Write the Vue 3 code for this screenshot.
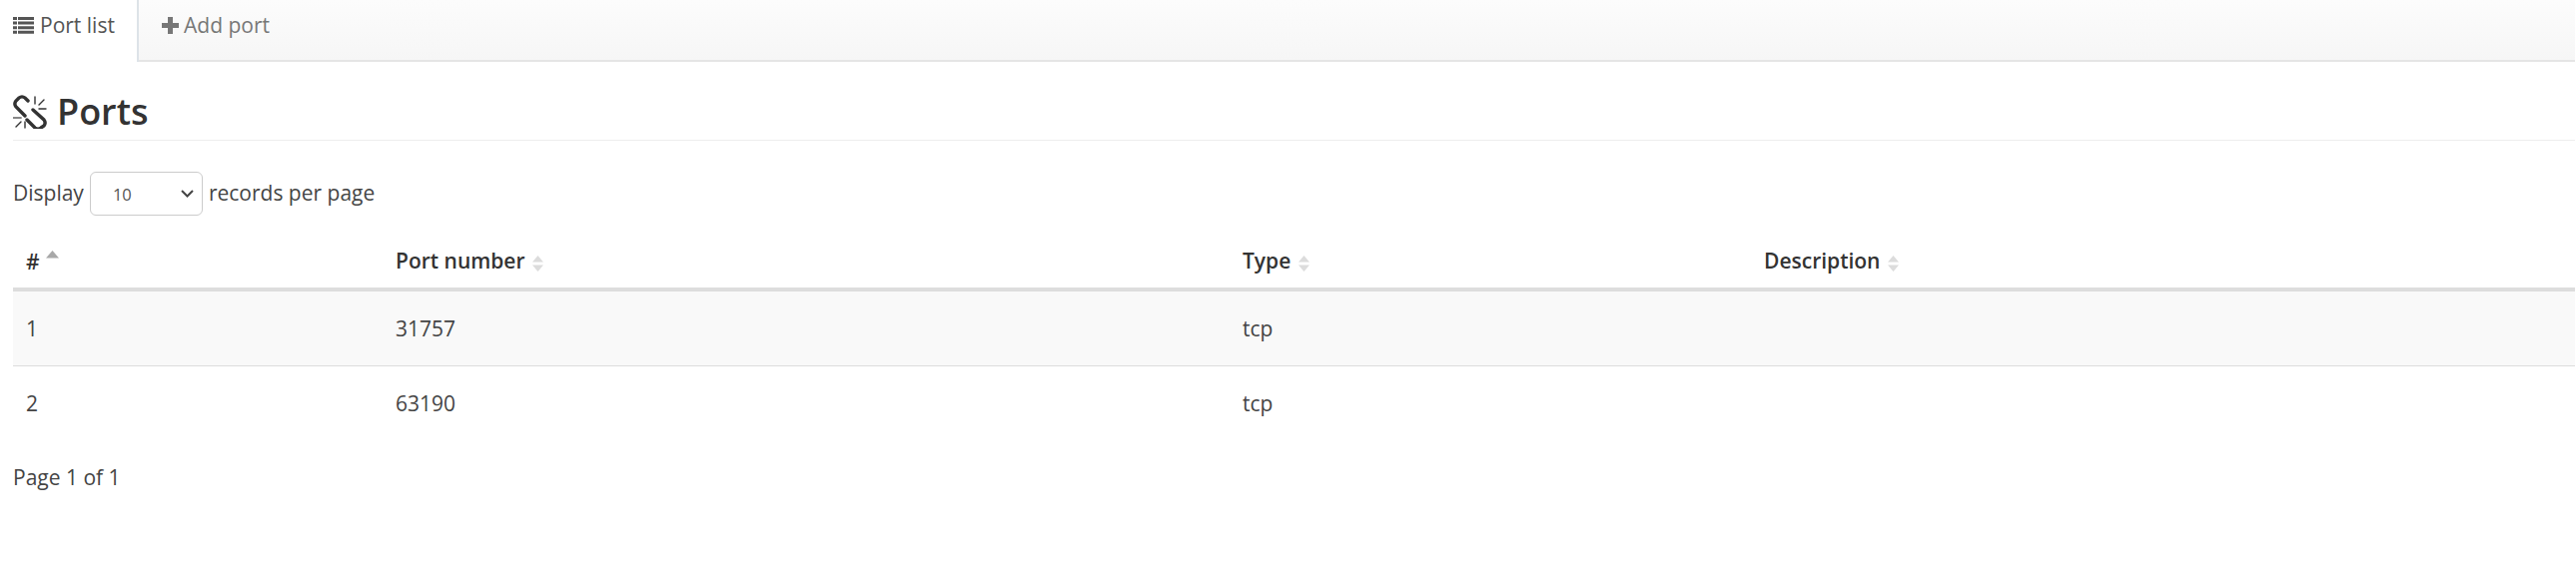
<script setup>
const columns = [
  { label: 'Port number', width: '848px' },
  { label: 'Type', width: '522px' },
  { label: 'Description' }
]

const ports = [
  { id: 1, port: 31757, type: 'tcp', description: '' },
  { id: 2, port: 63190, type: 'tcp', description: '' }
]
</script>

<template>
  <div class="page">
    <nav class="tabs">
      <a class="tab active">
        <svg class="tab-icon" width="21" height="17" viewBox="0 0 21 17">
          <path d="M0 0h4v3H0zM5 0h16v3H5zM0 4.600h4v3H0zM5 4.600h16v3H5zM0 9.200h4v3H0zM5 9.200h16v3H5zM0 13.800h4v3H0zM5 13.800h16v3H5z" fill="#555" />
        </svg>
        Port list
      </a>
      <a class="tab">
        <svg class="tab-icon" width="17" height="17" viewBox="0 0 17 17">
          <path d="M6 0h5v6h6v5h-6v6H6v-6H0V6h6z" fill="#777" />
        </svg>
        Add port
      </a>
    </nav>

    <main class="content">
      <h1 class="title">
        <svg class="title-icon" width="34" height="34" viewBox="13 93 34 34">
          <g fill="none" stroke="#333" stroke-linecap="round">
            <path d="M28 99l-3-3c-2-1.500-4-1.500-6 0l-3 3c-1.500 2-1.500 4 0 6l9 9" stroke-width="3.400" />
            <path d="M33 108l11 10c1.500 2 1.500 4 0 6l-3 2c-2 1.500-4 1.500-6 0l-8-8" stroke-width="3.400" />
            <path d="M35 95v7M39 103l5-5M39 107h7M25 120v6M16 125l5-5" stroke-width="1.400" />
            <path d="M13 116h8" stroke="#888" stroke-width="1.800" />
          </g>
        </svg>
        Ports
      </h1>

      <div class="length">
        Display
        <select class="length-select">
          <option>10</option>
        </select>
        records per page
      </div>

      <table class="table">
        <thead>
          <tr>
            <th class="col-id">
              #
              <svg class="sort" width="13" height="8" viewBox="0 0 13 8">
                <path d="M6.500 0L13 7.500H0z" fill="#a8a8a8" />
              </svg>
            </th>
            <th v-for="col in columns" :key="col.label" :style="{ width: col.width }">
              {{ col.label }}
              <svg class="sort both" width="11" height="16" viewBox="0 0 11 16">
                <path d="M5.500 0L11 6.500H0zM5.500 16L0 9.500h11z" fill="#dcdcdc" />
              </svg>
            </th>
          </tr>
        </thead>
        <tbody>
          <tr v-for="row in ports" :key="row.id">
            <td>{{ row.id }}</td>
            <td>{{ row.port }}</td>
            <td>{{ row.type }}</td>
            <td>{{ row.description }}</td>
          </tr>
        </tbody>
      </table>

      <p class="info">Page 1 of 1</p>
    </main>
  </div>
</template>

<style>
html, body {
  background: #fff;
}
</style>

<style scoped>
.page {
  font-family: 'Open Sans', sans-serif;
  font-size: 21px;
  color: #333;
  line-height: 20px;
  height: 579px;
  overflow: hidden;
}

.tabs {
  display: flex;
  height: 62px;
  background: linear-gradient(#fcfcfc, #f6f6f6);
  border-bottom: 2px solid #e5e5e5;
  box-sizing: border-box;
  margin-right: 1px;
}

.tab {
  display: flex;
  align-items: center;
  height: 50px;
  padding: 0 0 0 23px;
  font-size: 21px;
  color: #777;
  gap: 5px;
}

.tab.active {
  width: 139px;
  box-sizing: border-box;
  height: 62px;
  padding: 0 0 12px 13px;
  background: #fff;
  color: #555;
  gap: 6px;
  border-right: 2px solid #dde3e8;
}

.tab-icon {
  flex: none;
}

.content {
  padding: 0 1px 0 13px;
}

.title {
  display: flex;
  align-items: center;
  height: 79px;
  margin: 0;
  padding-top: 22px;
  gap: 10px;
  font-size: 36px;
  font-weight: 600;
  color: #333;
  border-bottom: 1px solid #eee;
  box-sizing: border-box;
}

.length {
  display: flex;
  align-items: flex-start;
  gap: 6px;
  margin-top: 31px;
  height: 44px;
  line-height: 42px;
  color: #444;
}

.length-select {
  appearance: none;
  width: 113px;
  height: 44px;
  padding: 0 0 0 22px;
  border: 1px solid #ccc;
  border-radius: 6px;
  background: #fff url("data:image/svg+xml,%3Csvg xmlns='http://www.w3.org/2000/svg' width='13' height='8' viewBox='0 0 13 8'%3E%3Cpath d='M1 1l5.500 5.500L12 1' fill='none' stroke='%23444' stroke-width='2'/%3E%3C/svg%3E") no-repeat right 8px center;
  color: #555;
  font-family: inherit;
  font-size: 16.500px;
}

.table {
  width: 100%;
  margin-top: 19px;
  border-collapse: collapse;
  table-layout: fixed;
}

th {
  height: 55px;
  padding: 0 13px;
  box-sizing: border-box;
  text-align: left;
  font-weight: 600;
  color: #333;
  border-bottom: 4px solid #ddd;
}

.col-id {
  width: 370px;
}

.sort {
  margin-left: 2px;
}

.sort:not(.both) {
  vertical-align: 11px;
  margin-left: 1px;
}

.sort.both {
  vertical-align: -3px;
}

td {
  height: 75px;
  padding: 0 13px;
  box-sizing: border-box;
  color: #444;
  border-bottom: 1px solid #ddd;
}

tbody tr:first-child td {
  height: 76px;
  background: #f9f9f9;
}

tbody tr:last-child td {
  border-bottom: none;
}

.info {
  margin: 27px 0 0;
  color: #444;
}
</style>
